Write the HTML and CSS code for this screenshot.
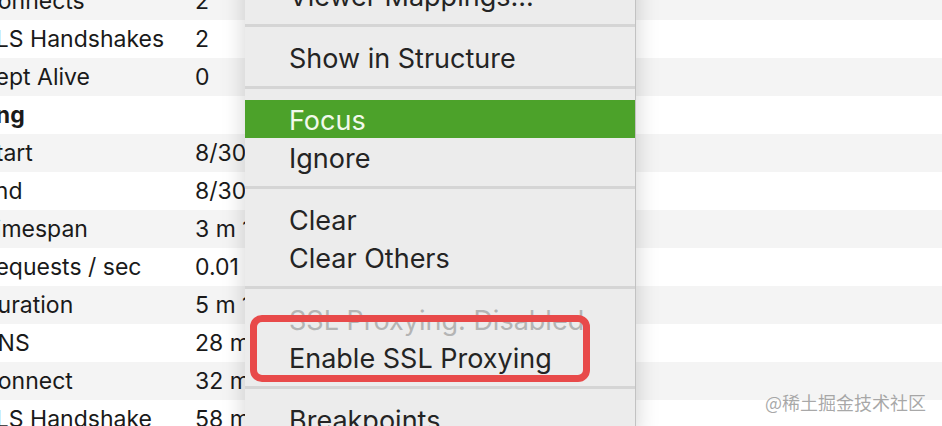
FILE: index.html
```html
<!DOCTYPE html>
<html lang="en">
<head>
    <meta charset="UTF-8">
    <title>Summary - Context Menu</title>
    <link rel="stylesheet" href="styles.css">
</head>
<body>
    <div class="summary">
        <div class="row"><span class="label">Connects</span><span class="value">2</span></div>
        <div class="row"><span class="label">TLS Handshakes</span><span class="value">2</span></div>
        <div class="row"><span class="label">Kept Alive</span><span class="value">0</span></div>
        <div class="row section"><span class="label">Timing</span><span class="value"></span></div>
        <div class="row"><span class="label">Start</span><span class="value">8/30/21 10:12:31</span></div>
        <div class="row"><span class="label">End</span><span class="value">8/30/21 10:15:44</span></div>
        <div class="row"><span class="label">Timespan</span><span class="value">3 m 13 s</span></div>
        <div class="row"><span class="label">Requests / sec</span><span class="value">0.01</span></div>
        <div class="row"><span class="label">Duration</span><span class="value">5 m 12 s</span></div>
        <div class="row"><span class="label">DNS</span><span class="value">28 ms</span></div>
        <div class="row"><span class="label">Connect</span><span class="value">32 ms</span></div>
        <div class="row"><span class="label">TLS Handshake</span><span class="value">58 ms</span></div>
    </div>

    <!-- context menu over the summary table -->
    <div class="menu">
        <div class="item">Viewer Mappings...</div>
        <div class="sep"></div>
        <div class="item">Show in Structure</div>
        <div class="sep"></div>
        <div class="item active">Focus</div>
        <div class="item">Ignore</div>
        <div class="sep"></div>
        <div class="item">Clear</div>
        <div class="item">Clear Others</div>
        <div class="sep"></div>
        <div class="item disabled">SSL Proxying: Disabled</div>
        <div class="item">Enable SSL Proxying</div>
        <div class="sep"></div>
        <div class="item">Breakpoints</div>
    </div>

    <div class="mark"></div>
    <div class="watermark">@稀土掘金技术社区</div>
</body>
</html>
```

FILE: styles.css
```css
body {
    margin: 0;
    background-color: #fff;
    font-family: Inter, "Noto Sans", sans-serif;
    overflow: hidden;
    height: 426px;
    position: relative;
}
.summary {
    margin-top: -18px;
    margin-left: -19px;
}
.row {
    display: grid;
    grid-template-columns: 214px 1fr;
    height: 38px;
    align-items: center;
    font-size: 23px;
    color: #1a1a1a;
    white-space: nowrap;
}
.row:nth-child(odd) {
    background-color: #f4f4f4;
}
.section .label {
    font-weight: 700;
    margin-left: -34px;
}
.menu {
    position: absolute;
    left: 245px;
    top: -24px;
    width: 390px;
    background-color: #ececec;
    border-right: 1px solid #c2c2c2;
    box-shadow: 0 0 22px rgba(0, 0, 0, 0.18);
}
.item {
    box-sizing: border-box;
    height: 38px;
    padding-top: 3px;
    line-height: 35px;
    padding-left: 44px;
    font-size: 27px;
    color: #242424;
    white-space: nowrap;
}
.item.active {
    background-color: #4ca22a;
    color: #f2f9ec;
}
.item.disabled {
    color: #b4b4b4;
}
.sep {
    height: 3px;
    margin: 10px 0 11px;
    background-color: #d5d5d5;
}
.mark {
    position: absolute;
    left: 250px;
    top: 315px;
    width: 326px;
    height: 53px;
    border: 7px solid #e84a4a;
    border-radius: 12px;
}
.watermark {
    position: absolute;
    right: 16px;
    top: 389px;
    font-family: "Noto Sans CJK SC", sans-serif;
    font-size: 18px;
    color: rgba(140, 140, 140, 0.75);
}
```
